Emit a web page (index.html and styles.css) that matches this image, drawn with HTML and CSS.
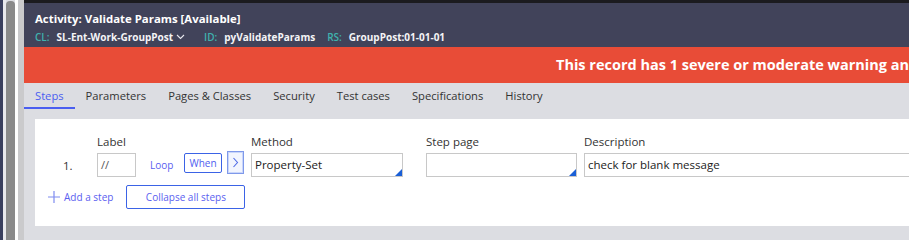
FILE: index.html
```html
<!DOCTYPE html>
<html>
<head>
<meta charset="utf-8">
<link rel="stylesheet" href="styles.css">
</head>
<body>
<div class="strip navy"></div>
<div class="strip pale"></div>
<div class="strip scroll"></div>
<div class="strip white"></div>
<div class="strip grey"></div>
<main class="main">
  <div class="topbar"></div>
  <header class="header">
    <div class="title">Activity: Validate Params <span class="avail">[Available]</span></div>
    <div class="meta">
      <span class="key">CL:</span><span class="val cl">SL-Ent-Work-GroupPost</span>
      <svg class="caret" width="9" height="6" viewBox="0 0 9 6"><path d="M1 1l3.5 3.5L8 1" fill="none" stroke="#e8e8ee" stroke-width="1.1"/></svg>
      <span class="key">ID:</span><span class="val">pyValidateParams</span>
      <span class="key">RS:</span><span class="val">GroupPost:01-01-01</span>
    </div>
  </header>
  <div class="banner"><span class="banner-text">This record has 1 severe or moderate warning and</span></div>
  <nav class="tabs">
    <span class="tab active">Steps</span>
    <span class="tab">Parameters</span>
    <span class="tab">Pages &amp; Classes</span>
    <span class="tab">Security</span>
    <span class="tab">Test cases</span>
    <span class="tab">Specifications</span>
    <span class="tab">History</span>
  </nav>
  <section class="body">
    <div class="card">
      <div class="grid">
        <div class="lbl c-label">Label</div>
        <div class="lbl c-method">Method</div>
        <div class="lbl c-step">Step page</div>
        <div class="lbl c-desc">Description</div>

        <div class="num c-num">1.</div>
        <div class="input c-label">//</div>
        <div class="link c-loop">Loop</div>
        <div class="btn-when c-when">When</div>
        <div class="chev c-chev"><svg width="7" height="11" viewBox="0 0 7 11"><path d="M1.5 1l4 4.5-4 4.5" fill="none" stroke="#4f6ae6" stroke-width="1.1"/></svg></div>
        <div class="input tri c-method">Property-Set</div>
        <div class="input tri c-step"></div>
        <div class="input c-desc">check for blank message</div>
      </div>
      <div class="actions">
        <span class="add"><svg width="12" height="12" viewBox="0 0 12 12"><path d="M6 0v12M0 6h12" stroke="#7f8cf0" stroke-width="1.2"/></svg>Add a step</span>
        <span class="collapse">Collapse all steps</span>
      </div>
    </div>
  </section>
</main>
</body>
</html>
```
FILE: styles.css
```css
* { box-sizing: border-box; }
html, body { margin: 0; padding: 0; }
body {
  width: 909px;
  height: 240px;
  overflow: hidden;
  display: flex;
  font-family: "Open Sans", "Noto Sans", sans-serif;
  background: #dcdde2;
}
.strip { flex: none; height: 240px; }
.navy { width: 3px; background: #3a3f5e; }
.pale { width: 3px; background: #e9e9ec; }
.scroll { width: 9px; background: #8a8a8a; border-radius: 4px 4px 0 0; margin-top: 1px; }
.white { width: 3px; background: #ffffff; }
.grey { width: 6px; background: #cacacc; }
.main { flex: 1; min-width: 0; display: flex; flex-direction: column; overflow: hidden; }
.topbar { height: 3px; background: #1b1b1f; }
.header {
  height: 44px;
  background: #41435a;
  padding: 8px 0 0 11px;
  color: #ffffff;
}
.title { font-size: 11.4px; font-weight: 700; line-height: 16px; }
.meta { display: flex; align-items: center; margin-top: 3px; font-size: 10px; line-height: 14px; }
.key { color: #3fb2ae; font-weight: 600; margin-right: 7px; }
.val { font-weight: 700; color: #f4f4f6; margin-right: 12px; }
.val.cl { margin-right: 3px; }
.caret { margin-right: 19px; }
.banner {
  height: 36px;
  background: #e84c37;
  color: #ffffff;
  font-weight: 700;
  font-size: 14.5px;
  line-height: 36px;
  padding-left: 532px;
  white-space: nowrap;
  overflow: hidden;
}
.tabs {
  height: 26px;
  display: flex;
  align-items: flex-start;
  padding-top: 5px;
  font-size: 11.2px;
  color: #333333;
}
.tab { line-height: 16px; padding: 0 11px 5px; }
.tab.active { color: #4a5ef0; border-bottom: 2px solid #4a5ef0; padding-bottom: 3px; }
.body { padding: 10px 0 0 11px; flex: 1; }
.card {
  background: #ffffff;
  height: 107px;
  padding-top: 15px;
}
.grid {
  display: grid;
  grid-template-columns: 62px 39px 14px 34px 38px 5px 17px 7px 152px 23px 151px 7px 360px;
  grid-template-rows: 19px 24px;
  align-items: center;
}
.c-num { grid-column: 1; }
.c-label { grid-column: 2; }
.c-loop { grid-column: 4; }
.c-when { grid-column: 5; }
.c-chev { grid-column: 7; }
.c-method { grid-column: 9; }
.c-step { grid-column: 11; }
.c-desc { grid-column: 13; }
.lbl { grid-row: 1; font-size: 11.5px; color: #333333; line-height: 16px; align-self: start; }
.num { grid-row: 2; padding-left: 28px; font-size: 11.5px; color: #333333; }
.input {
  grid-row: 2;
  height: 24px;
  border: 1px solid #c8c8c8;
  font-size: 11.5px;
  line-height: 21px;
  padding-left: 3px;
  color: #222222;
  position: relative;
}
.c-label.input { color: #555555; font-size: 11px; }
.tri::after {
  content: "";
  position: absolute;
  right: 0;
  bottom: 0;
  border-style: solid;
  border-width: 0 0 7px 7px;
  border-color: transparent transparent #1a5fd6 transparent;
}
.link { grid-row: 2; font-size: 10px; color: #5a5ef0; }
.btn-when {
  grid-row: 2;
  height: 20px;
  border: 1px solid #3b63e6;
  border-radius: 2px;
  font-size: 10px;
  color: #4e5ef0;
  text-align: center;
  line-height: 18px;
  align-self: start;
}
.chev {
  grid-row: 2;
  height: 23px;
  margin-top: -2px;
  align-self: start;
  border: 1px solid #7f99ea;
  box-shadow: inset 0 0 0 1px #c9d6fa;
  background: #f2f5fe;
  display: flex;
  align-items: center;
  justify-content: center;
}
.actions { display: flex; align-items: center; margin-top: 8px; padding-left: 13px; }
.add { display: flex; align-items: center; font-size: 10px; color: #5a5ef0; gap: 4px; }
.collapse {
  margin-left: 13px;
  width: 119px;
  height: 24px;
  border: 1px solid #3b63e6;
  border-radius: 2px;
  font-size: 10px;
  color: #5a5ef0;
  text-align: center;
  line-height: 22px;
}
```
